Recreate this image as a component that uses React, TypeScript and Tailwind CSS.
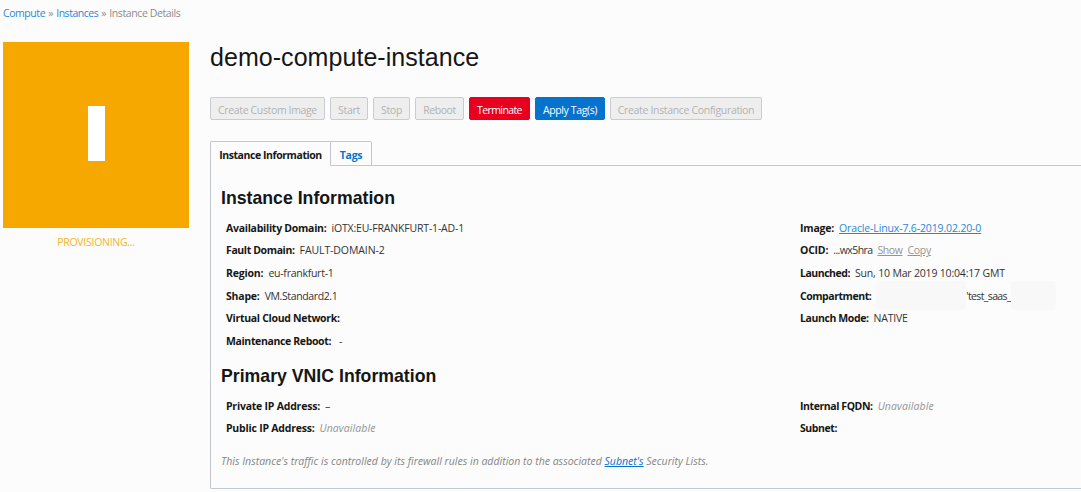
import type { ReactNode } from 'react';

const disabled = 'border-[#c9ccd2] bg-[#eeeeee] text-[#b2b2b2]';

const actions = [
  { label: 'Create Custom Image', cls: `w-[115px] tracking-[-0.36px] ${disabled}` },
  { label: 'Start', cls: `w-[38px] tracking-[-0.25px] ${disabled}` },
  { label: 'Stop', cls: `w-[37px] tracking-[-0.3px] ${disabled}` },
  { label: 'Reboot', cls: `w-[49px] tracking-[-0.45px] ${disabled}` },
  { label: 'Terminate', cls: 'w-[61px] tracking-[-0.6px] border-[#e8001f] bg-[#e8001f] text-white' },
  { label: 'Apply Tag(s)', cls: 'w-[70px] tracking-[-0.38px] border-[#0572ce] bg-[#0572ce] text-white' },
  { label: 'Create Instance Configuration', cls: `w-[152px] tracking-[-0.33px] ${disabled}` },
];

function Row({ label, t, children }: { label: string; t: string; children?: ReactNode }) {
  return (
    <div className="flex h-[22.6px] items-center gap-[5px] whitespace-nowrap pt-[2px]">
      <span className={`font-bold text-[#161616] ${t}`}>{label}</span>
      {children}
    </div>
  );
}

export default function App() {
  return (
    <div className="h-[492px] w-[1081px] overflow-hidden bg-[#fcfcfc] font-['Open_Sans','Noto_Sans',sans-serif] text-[10.5px] leading-[15px] text-[#333333]">
      <nav className="flex h-[42px] gap-[3px] pl-[3px] pt-[6px] text-[#8c8c8c]">
        <a className="tracking-[-0.43px] text-[#2b86d9]">Compute</a>
        <span className="tracking-[-0.2px]">»</span>
        <a className="tracking-[-0.47px] text-[#2b86d9]">Instances</a>
        <span className="tracking-[-0.2px]">»</span>
        <span className="tracking-[-0.4px]">Instance Details</span>
      </nav>
      <div className="flex pl-[3px]">
        <aside className="w-[186px] shrink-0">
          <div className="flex h-[186px] items-center justify-center bg-[#f6a700] pb-[3px]">
            <div className="h-[55px] w-[17px] bg-white" />
          </div>
          <p className="mt-[7px] text-center tracking-[-0.27px] text-[#f5b52e]">PROVISIONING...</p>
        </aside>
        <main className="ml-[21px] w-[871px] shrink-0">
          <h1 className="h-[55px] font-['Liberation_Sans',Arial,sans-serif] text-[25px] leading-[31px] tracking-[0.05px] text-[#161616]">
            demo-compute-instance
          </h1>
          <div className="flex gap-[5px]">
            {actions.map((a) => (
              <button key={a.label} className={`flex h-[23px] shrink-0 items-center justify-center whitespace-nowrap rounded-[2px] border pt-[3px] ${a.cls}`}>
                {a.label}
              </button>
            ))}
          </div>
          <div className="mt-[21px] flex h-[25px] font-bold">
            <div className="flex w-[120px] items-center justify-center rounded-tl-[2px] border-l border-t border-[#c3c8ce] pt-[2px] tracking-[-0.43px] text-[#161616]">
              Instance Information
            </div>
            <div className="flex w-[42px] items-center justify-center rounded-tr-[2px] border border-[#c3c8ce] pt-[3px] tracking-[-0.25px] text-[#0572ce]">
              Tags
            </div>
            <div className="grow border-b border-[#c3c8ce]" />
          </div>
          <section className="h-[323px] rounded-bl-[2px] border-b border-l border-[#c3c8ce] pl-[10px] pt-[21px]">
            <h2 className="h-[29px] font-['Liberation_Sans',Arial,sans-serif] text-[17.7px] font-bold leading-[23px] text-[#161616]">
              Instance Information
            </h2>
            <div className="flex h-[149px] pl-[5px]">
              <div className="w-[574px]">
                <Row label="Availability Domain:" t="tracking-[-0.27px]">
                  <span className="tracking-[-0.18px]">iOTX:EU-FRANKFURT-1-AD-1</span>
                </Row>
                <Row label="Fault Domain:" t="tracking-[-0.38px]">
                  <span className="tracking-[-0.1px]">FAULT-DOMAIN-2</span>
                </Row>
                <Row label="Region:" t="tracking-[-0.18px]">
                  <span className="tracking-[-0.26px]">eu-frankfurt-1</span>
                </Row>
                <Row label="Shape:" t="tracking-[-0.2px]">
                  <span className="tracking-[-0.38px]">VM.Standard2.1</span>
                </Row>
                <Row label="Virtual Cloud Network:" t="tracking-[-0.3px]" />
                <Row label="Maintenance Reboot:" t="tracking-[-0.36px]">
                  <span className="pl-[3px]">-</span>
                </Row>
              </div>
              <div>
                <Row label="Image:" t="tracking-[-0.2px]">
                  <a className="tracking-[-0.14px] text-[#2b86d9] underline">Oracle-Linux-7.6-2019.02.20-0</a>
                </Row>
                <Row label="OCID:" t="tracking-[-0.22px]">
                  <span className="tracking-[-0.58px]">...wx5hra</span>
                  <a className="tracking-[-0.42px] text-[#949494] underline">Show</a>
                  <a className="tracking-[-0.3px] text-[#949494] underline">Copy</a>
                </Row>
                <Row label="Launched:" t="tracking-[-0.47px]">
                  <span className="tracking-[-0.18px]">Sun, 10 Mar 2019 10:04:17 GMT</span>
                </Row>
                <Row label="Compartment:" t="tracking-[-0.46px]">
                  <span className="flex items-center">
                    <span className="-mb-[7px] -mt-[9px] h-[29px] w-[90px] rounded-[4px] bg-[#f8f8f8]" />
                    <span className="tracking-[-0.63px]">'test_saas_</span>
                    <span className="-mb-[7px] -mt-[9px] h-[29px] w-[45px] rounded-[4px] bg-[#f8f8f8]" />
                  </span>
                </Row>
                <Row label="Launch Mode:" t="tracking-[-0.4px]">
                  <span className="tracking-[-0.22px]">NATIVE</span>
                </Row>
              </div>
            </div>
            <h2 className="h-[29px] font-['Liberation_Sans',Arial,sans-serif] text-[17.7px] font-bold leading-[23px] text-[#161616]">
              Primary VNIC Information
            </h2>
            <div className="flex h-[60px] pl-[5px]">
              <div className="w-[574px]">
                <Row label="Private IP Address:" t="tracking-[-0.22px]">–</Row>
                <Row label="Public IP Address:" t="tracking-[-0.22px]">
                  <i className="tracking-[0.1px] text-[#949494]">Unavailable</i>
                </Row>
              </div>
              <div>
                <Row label="Internal FQDN:" t="tracking-[-0.42px]">
                  <i className="tracking-[0.1px] text-[#949494]">Unavailable</i>
                </Row>
                <Row label="Subnet:" t="tracking-[-0.42px]" />
              </div>
            </div>
            <p className="italic tracking-[0.01px] text-[#858585]">
              This Instance's traffic is controlled by its firewall rules in addition to the associated{' '}
              <a className="text-[#0572ce] underline">Subnet's</a> Security Lists.
            </p>
          </section>
        </main>
      </div>
    </div>
  );
}
